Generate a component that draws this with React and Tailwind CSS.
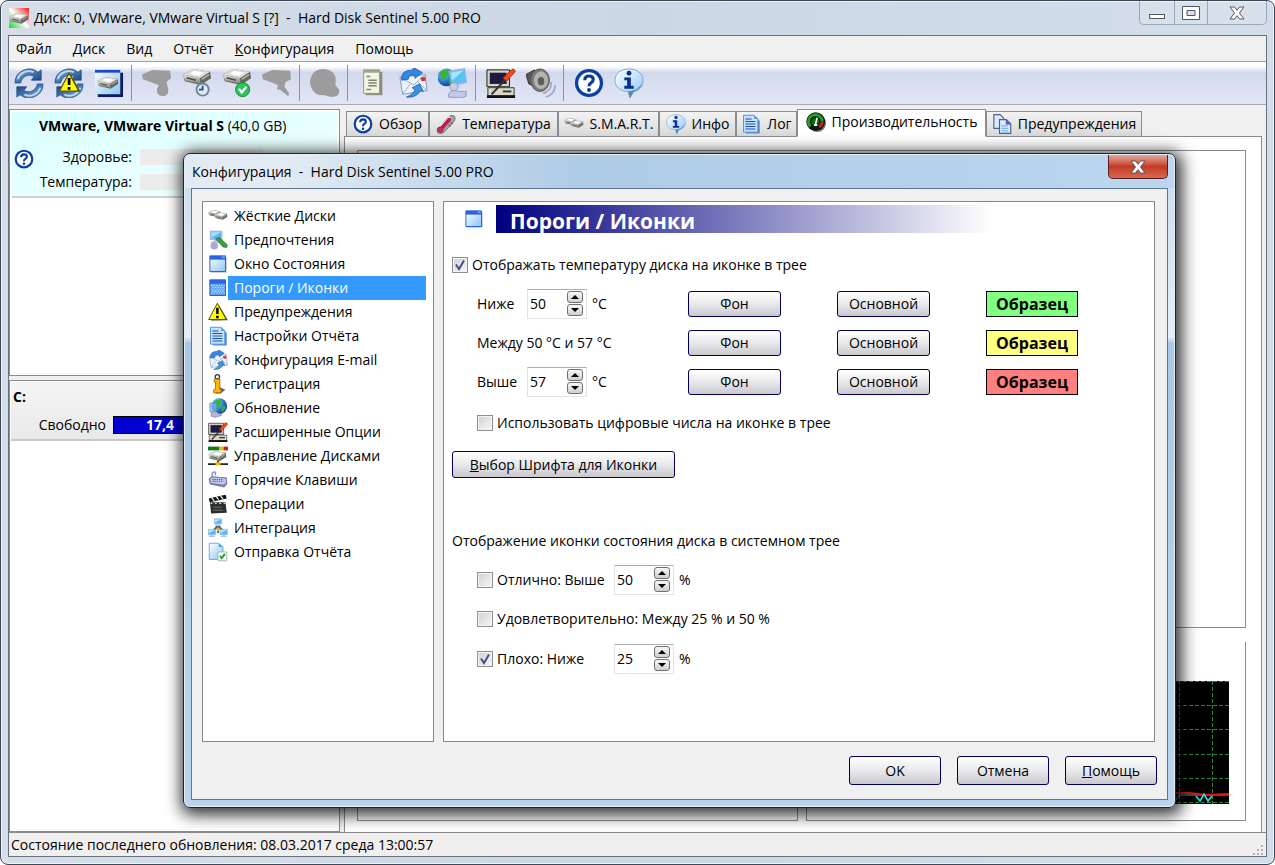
import React, { useState } from "react";

const SharedGradients = () => (
  <svg className="absolute h-0 w-0" aria-hidden="true">
    <defs>
      <linearGradient id="steel" x1="0" y1="0" x2="1" y2="1">
        <stop offset="0" stopColor="#9dbcd8" />
        <stop offset="0.5" stopColor="#4478ae" />
        <stop offset="1" stopColor="#123a78" />
      </linearGradient>
      <linearGradient id="sky" x1="0" y1="0" x2="1" y2="1">
        <stop offset="0" stopColor="#ffffff" />
        <stop offset="1" stopColor="#8cc4f4" />
      </linearGradient>
      <linearGradient id="metal" x1="0" y1="0" x2="0" y2="1">
        <stop offset="0" stopColor="#e4e4e0" />
        <stop offset="1" stopColor="#7d7d78" />
      </linearGradient>
      <linearGradient id="corner" x1="1" y1="0" x2="0" y2="1">
        <stop offset="0" stopColor="#f01818" />
        <stop offset="0.5" stopColor="#ffffff" />
        <stop offset="1" stopColor="#18d030" />
      </linearGradient>
      <radialGradient id="globe" cx="0.35" cy="0.3" r="0.8">
        <stop offset="0" stopColor="#9fdcff" />
        <stop offset="0.5" stopColor="#2f80d8" />
        <stop offset="1" stopColor="#0c3080" />
      </radialGradient>
    </defs>
  </svg>
);

const Svg = ({ size = 32, className = "", children }) => (
  <svg
    viewBox="0 0 32 32"
    width={size}
    height={size}
    className={"shrink-0 " + className}
    aria-hidden="true"
  >
    {children}
  </svg>
);

/* shapes used in several icons */
const Drive = ({ x = 0, y = 0, s = 1 }) => (
  <g transform={`translate(${x} ${y}) scale(${s})`}>
    <path d="M1 8 L12 2 L30 5 L31 12 L20 19 L3 15Z" fill="#66665f" />
    <path d="M1 8 L12 2 L30 5 L19 12Z" fill="#dcdcd6" />
    <path d="M1 8 L19 12 L20 18 L3 14Z" fill="url(#metal)" />
    <path d="M8 7 L13 4 L24 6 L18 9.500Z" fill="#ffffff" />
    <path d="M5 11.500 L15 14" stroke="#4c4c46" strokeWidth="1.6" />
    <path d="M21 13 L29 8" stroke="#b4b4ae" strokeWidth="1.6" />
  </g>
);

const CycleHalf = () => (
  <g>
    <path
      d="M1 16 A15 15 0 0 1 25.500 4.500 L29 2 V13 H18.500 L21.500 9 A9.500 9.500 0 0 0 7.500 14.500 L7 16Z"
      fill="url(#steel)"
      stroke="#1d4a84"
      strokeWidth="0.8"
    />
    <path d="M4 12 A12.500 12.500 0 0 1 21 4.500" fill="none" stroke="#c3d8ec" strokeWidth="2" />
  </g>
);

const Cycle = () => (
  <g>
    <CycleHalf />
    <g transform="rotate(180 16 16.500)">
      <CycleHalf />
    </g>
  </g>
);

const Warning = ({ x = 0, y = 0, s = 1 }) => (
  <g transform={`translate(${x} ${y}) scale(${s})`}>
    <path d="M18 5 L32 29 L5 30Z" fill="#666" />
    <path d="M15 2 L29 28 H1Z" fill="#ffff00" stroke="#5a5200" strokeWidth="1.6" strokeLinejoin="round" />
    <path d="M13 9 H17 V19 H13Z M13 22 H17 V26 H13Z" fill="#000" />
  </g>
);

const Globe = ({ cx, cy, r }) => (
  <g transform={`translate(${cx} ${cy}) scale(${r / 10})`}>
    <circle r="10" fill="url(#globe)" />
    <path d="M-8 -4 Q-4 -10 2 -8 L4 -4 L0 0 L-3 4 L-6 1Z M3 1 L8 0 Q8 5 3 8Z" fill="#36b443" />
  </g>
);

const Monitor = ({ x = 0, y = 0, s = 1 }) => (
  <g transform={`translate(${x} ${y}) scale(${s})`}>
    <path d="M2 2 H24 V18 H2Z" fill="#a9cdf0" stroke="#6d93c4" />
    <path d="M4 4 H22 V16 H4Z" fill="#58b6f6" />
    <path d="M4 4 H22 L4 14Z" fill="#a7e2ff" />
    <path d="M9 18 H17 V21 H22 V24 H4 V21 H9Z" fill="#b7c3e0" />
  </g>
);

const MailSheet = () => (
  <g>
    <path d="M2 10 L29 7 L31 24 L5 28Z" fill="#eef2fa" stroke="#7d97bd" />
    <path d="M2 10 L17 18 L29 7 M5 28 L13 17 M31 24 L21 15" fill="none" stroke="#92a8ca" />
    <path d="M24 10 L29 9.500 L29.500 13.500 L25 14Z" fill="#e03020" />
    <path d="M4 13 Q2 2 16 2 V-1 L26 5 L18 11 V8 Q11 6 11 12Z" fill="#3388de" stroke="#1458a8" strokeWidth="0.8" />
    <path d="M15 21 L23 17 L27 25 L24 24 Q20 32 9 31 Q17 28 18 23Z" fill="#3a92e4" stroke="#1458a8" strokeWidth="0.8" />
  </g>
);

const TextPage = () => (
  <g>
    <path d="M8 5 H24 L30 11 V31 H8Z" fill="#5a8cc4" />
    <path d="M4 2 H21 L27 8 V29 H4Z" fill="#c5e3ff" stroke="#3a8ae0" strokeWidth="1.4" />
    <path d="M21 2 L27 8 H21Z" fill="#5b9de4" />
    <path d="M7 8 H17 M7 12 H23 M7 16 H23 M7 20 H23 M7 24 H23" stroke="#1c4fb0" strokeWidth="1.8" />
  </g>
);

const Help = () => (
  <g>
    <circle cx="16" cy="16" r="15" fill="#0b3fa8" />
    <circle cx="16" cy="16" r="11.5" fill="#ffffff" />
    <path
      d="M11.5 13 Q11.5 8.5 16 8.5 Q20.5 8.5 20.5 12.3 Q20.5 14.5 18.2 15.8 Q16 17 16 19.5"
      fill="none"
      stroke="#0b3a98"
      strokeWidth="3.4"
    />
    <circle cx="16" cy="23.5" r="2.1" fill="#0b3a98" />
  </g>
);

const Info = () => (
  <g>
    <path d="M16 1 C25 1 31 6 31 13.500 C31 20 26 25 21 25 L17 32 L15 25 C7 25 1 20 1 13.500 C1 6 7 1 16 1Z" fill="url(#sky)" stroke="#7ba6c8" />
    <path d="M21 25 L17 32 L15 25 Q26 24 30 16 Q29 22 21 25Z" fill="#5c88a8" />
    <circle cx="16" cy="5.500" r="2.6" fill="#0a2f8c" />
    <path d="M11 10 H18 V19 H21 V22 H11 V19 H14 V13 H11Z" fill="#0a2f8c" />
  </g>
);

const AppWindow = () => (
  <g>
    <path d="M4 5 H30 V30 H4Z" fill="#bcc6d6" />
    <path d="M3 3 H28 V28 H3Z" fill="url(#sky)" stroke="#2866dc" strokeWidth="1.6" />
    <path d="M3 3 H28 V9 H3Z" fill="#2c62e4" />
    <path d="M22 5 H27" stroke="#a9c8ff" strokeWidth="1.6" />
  </g>
);

const Workstation = () => (
  <g>
    <path d="M1 2 H25 V20 H1Z" fill="#d8d4c4" stroke="#111" />
    <path d="M4 5 H22 V17 H4Z" fill="#1d1a44" />
    <path d="M2 21 H30 V30 H2Z" fill="#dad6c8" stroke="#333" />
    <path d="M1 29 H31 V32 H1Z" fill="#111" />
    <path d="M18 25 H27" stroke="#333" strokeWidth="2" />
    <path d="M6 28 L21 12" stroke="#333" strokeWidth="2" />
    <path d="M18 11 L27 2 Q31 0 31 4 L22 14Z" fill="#f04a18" stroke="#a82a08" />
  </g>
);

const Thermometer = () => (
  <g>
    <path d="M2 24 L20 4 Q26 0 30 4 Q32 9 28 13 L12 30 Q5 33 2 29Z" fill="#a4a4a4" stroke="#555" />
    <path d="M5 22 L22 4" stroke="#efefef" strokeWidth="3" />
    <path d="M7 25 L21 9" stroke="#c01858" strokeWidth="6" strokeLinecap="round" />
    <circle cx="7" cy="25" r="4.500" fill="#d02868" stroke="#802048" />
    <path d="M20 17 L24 20 M23 13 L27 16" stroke="#444" strokeWidth="1.5" />
  </g>
);

const Gauge = () => (
  <g>
    <circle cx="18" cy="18" r="14" fill="#777" />
    <circle cx="15.5" cy="15.5" r="15" fill="#151515" />
    <path d="M7 23 A11 11 0 1 1 26 15" fill="none" stroke="#15a81f" strokeWidth="4.500" />
    <path d="M26 15 A11 11 0 0 1 21 24" fill="none" stroke="#d02020" strokeWidth="4.500" />
    <circle cx="15" cy="16" r="6" fill="#087010" />
    <path d="M15 20 L18 9" stroke="#ffffff" strokeWidth="2.500" />
    <path d="M13 21 H18" stroke="#ffffff" strokeWidth="3" />
  </g>
);

const Pages = () => (
  <g fill="#dcebff" stroke="#4a5c9c" strokeWidth="1.8">
    <path d="M3 1 H13 L19 7 V23 H3Z" />
    <path d="M12 9 H23 L30 16 V31 H12Z" />
    <path d="M23 9 V16 H30" fill="#5a6cac" />
    <path d="M15 19 H26 M15 23 H26 M15 27 H26" stroke="#7fb5ee" />
  </g>
);

const toolbarGroups = [
  [
    { name: "Обновить", icon: <Cycle /> },
    { name: "Тест", icon: <><Cycle /><Warning x={5} y={4} s={0.74} /></> },
    {
      name: "Окно диска",
      icon: (
        <>
          <path d="M4 5 H31 V31 H4Z" fill="#0c1c5c" />
          <path d="M1 2 H28 V28 H1Z" fill="url(#sky)" />
          <path d="M1 2 H28 V5 H1Z" fill="#1c46d8" />
          <Drive x={3} y={8} s={0.74} />
        </>
      ),
    },
  ],
  [
    {
      name: "Питание",
      icon: <path d="M0 7 L11 2 L30 3 L31 11 L26 15 L28 22 Q29 30 22 30 Q15 29 16 22 L18 18 L9 15 L1 12Z" fill="#9c9c9c" />,
    },
    {
      name: "Короткий тест",
      icon: (
        <>
          <Drive x={0} y={-1} />
          <circle cx="22" cy="23" r="6.500" fill="#dcecf8" stroke="#6e8494" strokeWidth="2" />
          <path d="M22 19 V23 H18" stroke="#1c4f8c" strokeWidth="2" fill="none" />
        </>
      ),
    },
    {
      name: "Полный тест",
      icon: (
        <>
          <Drive x={0} y={-1} />
          <circle cx="22" cy="23" r="7.500" fill="#2cc45c" stroke="#148034" />
          <path d="M18 22 L21 26 L26 20" stroke="#fff" strokeWidth="2.4" fill="none" />
        </>
      ),
    },
    {
      name: "Остановить тест",
      icon: <path d="M0 7 L11 2 L30 3 L31 12 L25 15 L24 20 L29 27 L28 30 L19 23 L16 23 L17 18 L9 15 L1 12Z" fill="#9c9c9c" />,
    },
  ],
  [
    {
      name: "Акустика",
      icon: <path d="M2 8 Q5 1 14 1 Q24 1 27 9 Q28 14 27 18 L31 23 Q32 28 28 30 L22 31 L16 29 Q6 30 2 22 Q-2 15 2 8Z" fill="#9c9c9c" />,
    },
  ],
  [
    {
      name: "Отчёт",
      icon: (
        <>
          <path d="M8 4 H26 V29 H8Z" fill="#8c9078" />
          <path d="M6 2 H23 V27 H6Z" fill="#f4f4e6" stroke="#90947e" />
          <path d="M6 2 H23 V5 H6Z" fill="#9aa488" />
          <path d="M9 9 H13 M11 13 H20 M11 16 H20 M11 19 H20 M9 23 H14" stroke="#7c8474" strokeWidth="1.6" />
        </>
      ),
    },
    { name: "Отправить", icon: <MailSheet /> },
    {
      name: "Сеть",
      icon: (
        <>
          <Globe cx={9} cy={10} r={9.5} />
          <path d="M11 3 L29 0 L31 16 L15 19Z" fill="#8fb4e4" />
          <path d="M14 5 L28 2 L29 14 L16 17Z" fill="#52c4f8" />
          <path d="M14 5 L28 2 L15 13Z" fill="#a4e8ff" />
          <circle cx="17" cy="20" r="4.500" fill="#c8cce8" stroke="#9098c0" />
          <path d="M11 31 Q11 24 17 24 Q20 24 22 25 H30 V30 L24 32Z" fill="#c4c8e6" stroke="#9098c0" />
        </>
      ),
    },
  ],
  [
    { name: "Настройки", icon: <Workstation /> },
    {
      name: "Звук",
      icon: (
        <>
          <path d="M0 7 L9 2 L12 21 L3 17Z" fill="#55585c" stroke="#333" />
          <ellipse cx="15" cy="13" rx="10" ry="12" fill="#7a7a76" stroke="#555" />
          <ellipse cx="16" cy="13" rx="7.500" ry="9.500" fill="#b4b4ae" />
          <ellipse cx="16" cy="14" rx="3.500" ry="4.500" fill="#5c5c5c" />
          <path d="M18 27 Q27 25 27 15 M21 31 Q31 28 31 18" fill="none" stroke="#a4a4c0" strokeWidth="1.8" />
        </>
      ),
    },
  ],
  [
    { name: "Помощь", icon: <Help /> },
    { name: "О программе", icon: <Info /> },
  ],
];

const tabs = [
  { label: "Обзор", icon: <Help />, width: "w-[83px]" },
  { label: "Температура", icon: <Thermometer />, width: "w-[129px]" },
  { label: "S.M.A.R.T.", icon: <><Drive y={5} s={0.65} /><Drive x={10} y={9} s={0.68} /></>, width: "w-[101px]" },
  { label: "Инфо", icon: <Info />, width: "w-[77px]" },
  { label: "Лог", icon: <TextPage />, width: "w-[61px]" },
  { label: "Производительность", icon: <Gauge />, width: "w-[189px]" },
  { label: "Предупреждения", icon: <Pages />, width: "w-[156px]" },
];

const sections = [
  { label: "Жёсткие Диски", icon: <><Drive y={5} s={0.65} /><Drive x={10} y={9} s={0.68} /></> },
  {
    label: "Предпочтения",
    icon: (
      <>
        <Monitor x={2} y={0} s={0.85} />
        <circle cx="10" cy="25" r="6" fill="#a9a9d8" />
        <path d="M12 14 L18 12 L31 24 L30 28 L24 27Z" fill="#39a03c" stroke="#1c6420" />
      </>
    ),
  },
  { label: "Окно Состояния", icon: <AppWindow /> },
  {
    label: "Пороги / Иконки",
    icon: (
      <>
        <path d="M3 3 H28 V28 H3Z" fill="#5aa0ec" stroke="#2460d0" strokeWidth="1.6" />
        <path d="M3 3 H28 V9 H3Z" fill="#2c62e4" />
        <path
          d="M5 12 H27 M5 18 H27 M5 24 H27"
          stroke="#c9e5ff"
          strokeWidth="1.8"
          strokeDasharray="2 2"
        />
        <path d="M7 15 H27 M7 21 H27" stroke="#c9e5ff" strokeWidth="1.8" strokeDasharray="2 2" />
      </>
    ),
  },
  { label: "Предупреждения", icon: <Warning /> },
  { label: "Настройки Отчёта", icon: <TextPage /> },
  { label: "Конфигурация E-mail", icon: <MailSheet /> },
  {
    label: "Регистрация",
    icon: (
      <>
        <path d="M16 20 L28 25 L20 31 L12 31Z" fill="#666" />
        <circle cx="15" cy="4.500" r="3.500" fill="none" stroke="#333" strokeWidth="2" />
        <path d="M10 8 H19 V24 H21 V30 H9 V25 L12 24 V13 H10Z" fill="#ffb400" stroke="#7a4a00" />
      </>
    ),
  },
  {
    label: "Обновление",
    icon: (
      <>
        <Globe cx={18} cy={13} r={12.5} />
        <path d="M3 8 H14 V22 H3Z" fill="#6cb8f4" fillOpacity="0.7" stroke="#5a7cb8" />
        <path d="M5 23 Q10 19 16 24 L22 27 Q12 33 5 29Z" fill="#b4b4d4" stroke="#8080a8" />
      </>
    ),
  },
  { label: "Расширенные Опции", icon: <Workstation /> },
  {
    label: "Управление Дисками",
    icon: (
      <>
        <path d="M0 1 H18 V7 H0Z" fill="#0a7c1c" />
        <path d="M18 1 H25 V7 H18Z" fill="#e8b800" />
        <path d="M25 1 H32 V7 H25Z" fill="#d01c10" />
        <Drive y={6} s={0.95} />
        <path d="M0 29 H32 M16 23 V29" stroke="#222" strokeWidth="2.5" />
        <path d="M12 26 H20 V31 H12Z" fill="#e8b800" />
      </>
    ),
  },
  {
    label: "Горячие Клавиши",
    icon: (
      <>
        <path d="M8 12 Q4 4 10 3 Q14 4 11 8" fill="none" stroke="#8888a8" strokeWidth="2" />
        <path d="M1 14 L6 10 L30 12 L31 22 L26 28 L3 23Z" fill="#7c80ac" />
        <path d="M3 14 L7 11 L29 13 L29 21 L25 24 L4 21Z" fill="#c4c8ec" stroke="#6a6e9c" />
        <path d="M7 15 H24 M7 18 H25" stroke="#484c88" strokeWidth="1.6" strokeDasharray="2 1.500" />
      </>
    ),
  },
  {
    label: "Операции",
    icon: (
      <>
        <path d="M3 13 H28 L30 30 L5 31Z" fill="#2a2e30" />
        <path d="M1 7 L28 1 L30 7 L3 13Z" fill="#111" />
        <path d="M6 6 L10 11 M13 4 L17 9 M20 3 L24 8" stroke="#e8e8e8" strokeWidth="2" />
        <path d="M4 15 H29" stroke="#d0d0d0" strokeWidth="2" strokeDasharray="3 4" />
        <path d="M8 21 H22 M8 26 H24" stroke="#777" strokeWidth="1.4" />
      </>
    ),
  },
  {
    label: "Интеграция",
    icon: (
      <>
        <path d="M16 12 L7 22 M16 12 L25 22 M16 12 V24" stroke="#555c6c" strokeWidth="3" />
        <Monitor x={9} y={0} s={0.54} />
        <Monitor x={-1} y={17} s={0.56} />
        <Monitor x={18} y={17} s={0.56} />
        <path d="M13 18 L16 14 L19 18 L16 22Z" fill="#e0b020" />
      </>
    ),
  },
  {
    label: "Отправка Отчёта",
    icon: (
      <>
        <path d="M2 2 H17 L24 8 V28 H2Z" fill="url(#sky)" stroke="#5aa4e8" strokeWidth="1.4" />
        <path d="M17 2 L24 8 H17Z" fill="#5aa4e8" />
        <path d="M16 16 H30 V30 H16Z" fill="#ffffff" stroke="#98b898" strokeWidth="1.4" />
        <path d="M19 22 L22 26 L27 19" fill="none" stroke="#18a030" strokeWidth="3" />
      </>
    ),
  },
];

const thresholds = [
  { id: "below", label: "Ниже", value: "50", color: "bg-[#80ff80]" },
  { id: "between", label: "Между 50 °C и 57 °C", color: "bg-[#ffff80]" },
  { id: "above", label: "Выше", value: "57", color: "bg-[#ff8080]" },
];

const PushButton = ({ className = "", children }) => (
  <button
    type="button"
    className={
      "flex items-center justify-center rounded-[3px] border border-[#00005a] bg-linear-to-b from-white via-[#e9e9ec] to-[#c9c9ce] " +
      className
    }
  >
    {children}
  </button>
);

const CheckBox = ({ label, id, defaultChecked }) => (
  <div className="flex items-center">
    <span className="relative mr-1 flex h-4 w-4 shrink-0">
      <input
        id={id}
        type="checkbox"
        defaultChecked={defaultChecked}
        className="peer h-4 w-4 appearance-none border border-[#8e8f8f] bg-linear-to-br from-[#cfd0d4] to-[#f8f8f8] shadow-[inset_0_0_0_1px_#f4f4f4]"
      />
      <svg
        viewBox="0 0 16 16"
        className="pointer-events-none absolute inset-0 hidden h-4 w-4 peer-checked:block"
        aria-hidden="true"
      >
        <path d="M4 7.500 L7 12 L12 3.500" fill="none" stroke="#44508c" strokeWidth="2" />
      </svg>
    </span>
    <label htmlFor={id}>{label}</label>
  </div>
);

const Spinner = ({ id, initial, label }) => {
  const [value, setValue] = useState(initial);
  const step = (delta) => setValue(String(Number(value) + delta));

  return (
    <div className="flex h-[30px] w-[60px] items-center border border-[#e2e3ea] border-t-[#abadb3] bg-white pr-[3px]">
      <input
        id={id}
        type="text"
        aria-label={label}
        value={value}
        onChange={(e) => setValue(e.target.value)}
        className="w-0 flex-1 pl-0.5 outline-none"
      />
      <div className="flex flex-col gap-px">
        {[1, -1].map((delta) => (
          <button
            key={delta}
            type="button"
            aria-label={delta > 0 ? "Больше" : "Меньше"}
            onClick={() => step(delta)}
            className="flex h-3 w-4 items-center justify-center rounded-[3px] border border-[#707070] bg-linear-to-b from-[#f8f8f8] to-[#cfcfcf]"
          >
            <svg viewBox="0 0 8 4" width="8" height="4" aria-hidden="true">
              <path d={delta > 0 ? "M4 0 L8 4 H0Z" : "M0 0 H8 L4 4Z"} fill="#000" />
            </svg>
          </button>
        ))}
      </div>
    </div>
  );
};

const CloseGlyph = () => (
  <svg viewBox="0 0 16 14" width="16" height="14" aria-hidden="true">
    <path
      d="M1 1 H5.500 L8 4.300 L10.500 1 H15 L10.500 7 L15 13 H10.500 L8 9.700 L5.500 13 H1 L5.500 7Z"
      fill="#fff"
      stroke="#535666"
    />
  </svg>
);

const TitleBar = () => (
  <header className="flex h-[34px] items-start justify-between pl-px">
    <div className="flex items-center gap-[5px] pt-[7px]">
      <Svg size={20}>
        <path d="M0 0 H32 V32 H0Z" fill="url(#corner)" />
        <Drive y={6} />
      </Svg>
      <h1>Диск: 0, VMware, VMware Virtual S [?]&nbsp; -&nbsp; Hard Disk Sentinel 5.00 PRO</h1>
    </div>
    <div className="flex h-6 rounded-b-[5px] border border-t-0 border-[#9aa6b4] bg-white/10">
      <button type="button" aria-label="Свернуть" className="flex w-[35px] items-center justify-center border-r border-[#9aa6b4] pt-2">
        <span className="h-[5px] w-4 border border-[#535666] bg-white"></span>
      </button>
      <button type="button" aria-label="Развернуть" className="flex w-[33px] items-center justify-center border-r border-[#9aa6b4]">
        <svg viewBox="0 0 18 14" width="18" height="14" aria-hidden="true">
          <path
            d="M0.500 0.500 H17.500 V13.500 H0.500Z M5 4.500 V9.500 H13 V4.500Z"
            fill="#fff"
            fillRule="evenodd"
            stroke="#535666"
          />
        </svg>
      </button>
      <button type="button" aria-label="Закрыть" className="flex w-[58px] items-center justify-center">
        <CloseGlyph />
      </button>
    </div>
  </header>
);

const MenuBar = () => (
  <nav className="flex h-[26px] items-center gap-[21px] border-b border-[#a0a0a0] bg-[#f0f0f0] pl-[7px]">
    <button type="button">Файл</button>
    <button type="button">Диск</button>
    <button type="button">Вид</button>
    <button type="button">Отчёт</button>
    <button type="button"><u>К</u>онфигурация</button>
    <button type="button">Помощь</button>
  </nav>
);

const Toolbar = () => (
  <div className="flex h-[43px] items-center border-b border-[#a7abb8] bg-linear-to-b from-white from-10% via-[#d3d9ed] via-25% to-[#e2e6f6]">
    {toolbarGroups.map((group, index) => (
      <React.Fragment key={index}>
        {index > 0 && (
          <div className="flex w-2 pl-0.5">
            <span className="h-9 w-px bg-[#8c92a4]"></span>
          </div>
        )}
        {group.map((tool) => (
          <button key={tool.name} type="button" aria-label={tool.name} className="flex h-10 w-10 items-center justify-center">
            <Svg size={30}>{tool.icon}</Svg>
          </button>
        ))}
      </React.Fragment>
    ))}
  </div>
);

const DiskPanel = () => (
  <aside className="flex w-[331px] shrink-0 flex-col gap-1">
    <section className="h-[267px] border border-[#8a8c90] bg-white p-0.5">
      <div className="h-[86px] border-b-2 border-[#d0d0d0] bg-linear-to-br from-[#d8ffff] to-[#f4ffff] pt-1">
        <h2 className="pl-[27px] leading-5">
          <b>VMware, VMware Virtual S</b> (40,0 GB)
        </h2>
        <div className="mt-[11px] flex items-start">
          <Svg size={20} className="mt-0.5 ml-0.5">
            <Help />
          </Svg>
          <dl className="grid flex-1 grid-cols-[98px_123px] items-center gap-x-2 gap-y-[5px] leading-5">
            <dt className="text-right">Здоровье:</dt>
            <dd className="h-4 bg-[#ececec]"></dd>
            <dt className="text-right">Температура:</dt>
            <dd className="h-4 bg-[#ececec]"></dd>
          </dl>
        </div>
      </div>
    </section>
    <section className="flex-1 border border-[#8a8c90] bg-white p-px">
      <div className="h-[59px] border-b-2 border-[#c8c8c8] bg-linear-to-b from-[#f4f4f4] to-[#e9e9e9] px-0.5 pt-[5px]">
        <h2 className="font-bold leading-5">C:</h2>
        <div className="mt-2 flex items-center leading-5">
          <span className="w-[93px] text-right">Свободно</span>
          <span className="ml-[7px] h-[18px] w-[180px] border border-black bg-[#0000d0] pl-8 font-bold leading-4 text-white">
            17,4
          </span>
        </div>
      </div>
    </section>
  </aside>
);

const Chart = () => (
  <svg viewBox="0 0 400 123" width="400" height="123" className="shrink-0" aria-hidden="true">
    <rect width="400" height="123" fill="#000" />
    <path
      d="M0 0.500 H400 M0 24.500 H400 M0 48.500 H400 M0 73.500 H400 M0 97.500 H400 M0 121.500 H400 M350.500 0 V123 M383.500 0 V123 M317.500 0 V123"
      stroke="#2a8440"
      strokeDasharray="4 2"
    />
    <path d="M0 122 H345 L350 114 H375 L378 114 H400" fill="none" stroke="#30c0a8" />
    <path d="M0 112 H360 L378 114 L400 113" fill="none" stroke="#f01010" strokeWidth="2" />
    <path d="M367 115 L371 120 L375 113 L379 120 L383 115" fill="none" stroke="#20e0f0" strokeWidth="1.6" />
  </svg>
);

const Workspace = () => (
  <main className="flex min-w-0 flex-1 flex-col">
    <div role="tablist" className="relative flex h-7 items-end pl-0.5">
      {tabs.map((tab, index) => {
        const active = index === 5;
        return (
          <button
            key={tab.label}
            type="button"
            role="tab"
            aria-selected={active}
            className={
              "flex shrink-0 items-center justify-center gap-1.5 border border-[#8a8c90] whitespace-nowrap " +
              (active
                ? "h-7 border-b-white bg-white pb-0.5 "
                : "h-[26px] bg-linear-to-b from-[#f3f3f3] to-[#d9d9d9] ") +
              tab.width
            }
          >
            <Svg size={20}>{tab.icon}</Svg>
            {tab.label}
          </button>
        );
      })}
    </div>
    <div className="-mt-px mr-1 flex flex-1 flex-col gap-3.5 border border-b-0 border-[#8a8c90] bg-white pt-[13px] pr-[15px] pb-[11px] pl-3">
      <section className="flex-1 border border-[#8a8c90]"></section>
      <div className="grid h-[179px] grid-cols-2 gap-2">
        <section className="border border-[#8a8c90]"></section>
        <section className="flex min-w-0 items-end justify-end border border-t-0 border-[#8a8c90] pr-4 pb-4">
          <Chart />
        </section>
      </div>
    </div>
  </main>
);

const StatusBar = () => (
  <footer className="flex h-6 items-center justify-between border-t border-[#8a8c90] bg-[#f1eeee] pl-0.5">
    <span>Состояние последнего обновления: 08.03.2017 среда 13:00:57</span>
    <svg viewBox="0 0 12 12" width="12" height="12" className="mr-0.5 self-end" aria-hidden="true">
      <path d="M9 1h2v2h-2z M9 5h2v2h-2z M5 5h2v2h-2z M9 9h2v2h-2z M5 9h2v2h-2z M1 9h2v2h-2z" fill="#b4b4b4" />
    </svg>
  </footer>
);

const SectionList = () => {
  const [selected, setSelected] = useState("Пороги / Иконки");

  return (
    <ul className="w-[232px] shrink-0 border border-[#828790] bg-white pt-0.5 pr-[7px] pl-[5px]">
      {sections.map((section) => (
        <li key={section.label}>
          <button
            type="button"
            onClick={() => setSelected(section.label)}
            className="flex h-6 w-full items-center text-left leading-6"
          >
            <Svg size={20}>{section.icon}</Svg>
            <span
              className={
                "flex-1 pl-1.5 " +
                (selected === section.label ? "bg-[#3399ff] text-white" : "")
              }
            >
              {section.label}
            </span>
          </button>
        </li>
      ))}
    </ul>
  );
};

const ThresholdForm = () => (
  <section className="min-w-0 flex-1 border border-[#828790] bg-white pt-[3px] pl-2">
    <div className="flex items-center">
      <Svg size={20} className="ml-3">
        <AppWindow />
      </Svg>
      <h2 className="ml-3 flex h-7 w-[496px] items-center bg-linear-to-r/srgb from-[#000080] to-white pt-1 pl-[14px] text-[21px] font-bold text-white">
        Пороги / Иконки
      </h2>
    </div>

    <div className="mt-[22px]">
      <CheckBox id="show-temp" label="Отображать температуру диска на иконке в трее" defaultChecked />
    </div>

    <div className="mt-[9px] pl-[25px]">
      {thresholds.map((row) => (
        <div key={row.id} className="grid h-[39px] grid-cols-[211px_149px_149px_92px] items-center">
          <div className="flex items-center">
            {row.value ? (
              <>
                <label htmlFor={row.id} className="w-[50px]">
                  {row.label}
                </label>
                <Spinner id={row.id} initial={row.value} label={row.label} />
                <span className="ml-[5px]">°C</span>
              </>
            ) : (
              <span>{row.label}</span>
            )}
          </div>
          <PushButton className="h-[26px] w-[93px]">Фон</PushButton>
          <PushButton className="h-[26px] w-[93px]">Основной</PushButton>
          <div className={"flex h-[26px] items-center justify-center border border-black text-base font-bold " + row.color}>
            Образец
          </div>
        </div>
      ))}
      <div className="mt-3">
        <CheckBox id="digits" label="Использовать цифровые числа на иконке в трее" />
      </div>
    </div>

    <PushButton className="mt-[18px] h-[27px] w-[223px]">
      <span><u>В</u>ыбор Шрифта для Иконки</span>
    </PushButton>

    <p className="mt-[53px]">Отображение иконки состояния диска в системном трее</p>
    <div className="mt-[9px] pl-[25px]">
      <div className="grid h-[39px] grid-cols-[137px_60px_auto] items-center">
        <CheckBox id="excellent" label="Отлично: Выше" />
        <Spinner id="excellent-value" initial="50" label="Отлично" />
        <span className="ml-[5px]">%</span>
      </div>
      <div className="flex h-10 items-center">
        <CheckBox id="fair" label="Удовлетворительно: Между 25 % и 50 %" />
      </div>
      <div className="grid h-[39px] grid-cols-[137px_60px_auto] items-center">
        <CheckBox id="bad" label="Плохо: Ниже" defaultChecked />
        <Spinner id="bad-value" initial="25" label="Плохо" />
        <span className="ml-[5px]">%</span>
      </div>
    </div>
  </section>
);

const ConfigDialog = () => (
  <div
    role="dialog"
    aria-label="Конфигурация"
    className="flex min-h-0 flex-1 flex-col rounded-[7px] border border-[#1b2430] bg-[linear-gradient(to_bottom,#c9dced,#e4eef7_28%,#a9c8e4_29%,#bbd5ee)] px-[7px] pb-[7px] shadow-[2px_3px_16px_4px_rgba(0,0,0,0.8),inset_0_0_0_1px_#e4f0fa]"
  >
    <header className="-mx-[6px] mt-px flex h-[33px] items-start justify-between rounded-t-[6px] bg-linear-to-r from-[#e2ebf3] from-10% via-[#aecbe6] via-40% to-[#bcd6ef] pr-1.5 pl-[7px]">
      <h2 className="pt-[7px]">Конфигурация&nbsp; -&nbsp; Hard Disk Sentinel 5.00 PRO</h2>
      <button
        type="button"
        aria-label="Закрыть"
        className="flex h-6 w-[60px] items-center justify-center rounded-b-[5px] border border-t-0 border-[#5a1c20] bg-linear-to-b from-[#e5a89c] via-[#c23a26] via-50% to-[#d8694e]"
      >
        <CloseGlyph />
      </button>
    </header>
    <div className="flex flex-1 flex-col border border-[#5c7590] bg-[#f0f0f0] pt-3 pr-2.5 pb-3.5 pl-2.5">
      <div className="mr-0.5 mb-3.5 flex flex-1 gap-[9px]">
        <SectionList />
        <ThresholdForm />
      </div>
      <div className="flex justify-end gap-4">
        <PushButton className="h-[29px] w-[92px]">OK</PushButton>
        <PushButton className="h-[29px] w-[92px]">Отмена</PushButton>
        <PushButton className="h-[29px] w-[92px]">
          <span><u>П</u>омощь</span>
        </PushButton>
      </div>
    </div>
  </div>
);

const App = () => (
  <div className="relative flex min-h-screen flex-col bg-white font-['Open_Sans','Noto_Sans',sans-serif] text-sm text-black">
    <SharedGradients />
    <div className="flex flex-1 flex-col rounded-[8px] border border-[#3c4654] bg-linear-to-r from-[#d5dee8] via-[#cbd7e4] to-[#d3deea] px-[7px] pb-[7px] shadow-[inset_0_0_0_1px_#eef3f8]">
      <TitleBar />
      <div className="flex flex-1 flex-col border border-[#68727e] bg-[#f0f0f0]">
        <MenuBar />
        <Toolbar />
        <div className="flex flex-1 gap-1 pt-1">
          <DiskPanel />
          <Workspace />
        </div>
        <StatusBar />
      </div>
    </div>
    <div className="absolute inset-0 flex pt-[153px] pr-[99px] pb-[57px] pl-[183px]">
      <ConfigDialog />
    </div>
  </div>
);

export default App;
